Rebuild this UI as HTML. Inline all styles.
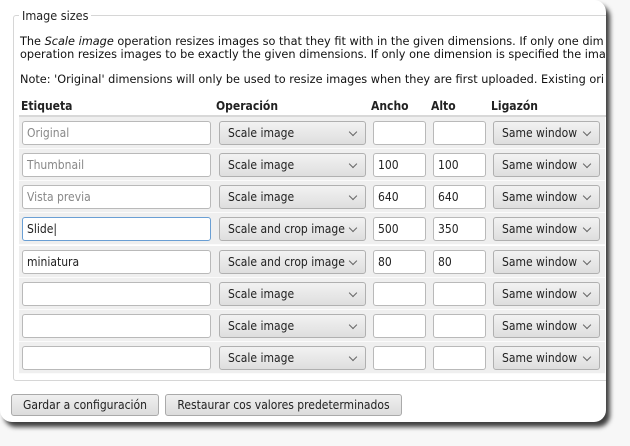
<!DOCTYPE html>
<html><head><meta charset="utf-8"><style>
*{box-sizing:border-box;margin:0;padding:0}
body{width:630px;height:446px;background:#f7f7f7;position:relative;overflow:hidden;font-family:"DejaVu Sans Condensed","DejaVu Sans","Liberation Sans",sans-serif;font-size:12px;color:#222}
.win{position:absolute;left:0;top:0;width:606px;height:422px;background:#fff;border-radius:0 12px 12px 12px;box-shadow:4px 5px 5px rgba(0,0,0,.75);overflow:hidden}
.fs{position:absolute;left:13px;top:15px;width:640px;height:366px;border:1px solid #d6d6d6;border-radius:3px}
.lg{position:absolute;left:19px;top:8px;background:#fff;padding:0 3px;font-size:12.5px}
.t{position:absolute;left:20px;white-space:nowrap;font-family:"DejaVu Sans",sans-serif;font-size:11.3px;color:#111}
.h{position:absolute;top:99px;font-weight:bold;font-size:12px}
.hl{position:absolute;left:19px;top:115px;width:590px;height:2px;background:#d8d8d8}
.row{position:absolute;left:19px;width:586px;height:32px;background:#efefef;border-bottom:1px solid #fbfbfb}
.in{position:absolute;top:4px;height:24px;background:#fff;border:1px solid #b9b9b9;border-radius:3px;padding-left:4px;line-height:22px;font-size:12px;color:#222;white-space:nowrap}
.sel{position:absolute;top:4px;height:24px;border:1px solid #b0b0b0;border-radius:3px;background:linear-gradient(#f2f2f2,#dedede);padding-left:8px;line-height:22px;font-size:12px;color:#222;white-space:nowrap;overflow:hidden}
.sel:after{content:"";position:absolute;right:9px;top:7px;width:5px;height:5px;border-right:1px solid #666;border-bottom:1px solid #666;transform:rotate(45deg)}
.btn{position:absolute;top:394px;height:22px;border:1px solid #aaa;border-radius:3px;background:linear-gradient(#f0f0f0,#dcdcdc);font-size:12px;text-align:center;line-height:20px;color:#222;white-space:nowrap}
</style></head><body>
<div class="win">
<div class="fs"></div>
<div class="lg">Image sizes</div>
<div class="t" style="top:35px">The <i>Scale image</i> operation resizes images so that they fit with in the given dimensions. If only one dim</div>
<div class="t" style="top:48px">operation resizes images to be exactly the given dimensions. If only one dimension is specified the ima</div>
<div class="t" style="top:73px">Note: 'Original' dimensions will only be used to resize images when they are first uploaded. Existing ori</div>
<div class="h" style="left:21px">Etiqueta</div>
<div class="h" style="left:216px">Operación</div>
<div class="h" style="left:371px">Ancho</div>
<div class="h" style="left:431px">Alto</div>
<div class="h" style="left:491px">Ligazón</div>
<div class="hl"></div>

<div class="row" style="top:117px"><div class="in" style="left:3px;width:189px;color:#888">Original</div><div class="sel" style="left:200px;width:147px">Scale image</div><div class="in" style="left:354px;width:53px"></div><div class="in" style="left:414px;width:53px"></div><div class="sel" style="left:474px;width:107px">Same window</div></div>
<div class="row" style="top:149px"><div class="in" style="left:3px;width:189px;color:#888">Thumbnail</div><div class="sel" style="left:200px;width:147px">Scale image</div><div class="in" style="left:354px;width:53px">100</div><div class="in" style="left:414px;width:53px">100</div><div class="sel" style="left:474px;width:107px">Same window</div></div>
<div class="row" style="top:181px"><div class="in" style="left:3px;width:189px;color:#888">Vista previa</div><div class="sel" style="left:200px;width:147px">Scale image</div><div class="in" style="left:354px;width:53px">640</div><div class="in" style="left:414px;width:53px">640</div><div class="sel" style="left:474px;width:107px">Same window</div></div>
<div class="row" style="top:213px"><div class="in" style="left:3px;width:189px;border-color:#6a9fd4">Slide|</div><div class="sel" style="left:200px;width:147px">Scale and crop image</div><div class="in" style="left:354px;width:53px">500</div><div class="in" style="left:414px;width:53px">350</div><div class="sel" style="left:474px;width:107px">Same window</div></div>
<div class="row" style="top:246px"><div class="in" style="left:3px;width:189px">miniatura</div><div class="sel" style="left:200px;width:147px">Scale and crop image</div><div class="in" style="left:354px;width:53px">80</div><div class="in" style="left:414px;width:53px">80</div><div class="sel" style="left:474px;width:107px">Same window</div></div>
<div class="row" style="top:278px"><div class="in" style="left:3px;width:189px"></div><div class="sel" style="left:200px;width:147px">Scale image</div><div class="in" style="left:354px;width:53px"></div><div class="in" style="left:414px;width:53px"></div><div class="sel" style="left:474px;width:107px">Same window</div></div>
<div class="row" style="top:310px"><div class="in" style="left:3px;width:189px"></div><div class="sel" style="left:200px;width:147px">Scale image</div><div class="in" style="left:354px;width:53px"></div><div class="in" style="left:414px;width:53px"></div><div class="sel" style="left:474px;width:107px">Same window</div></div>
<div class="row" style="top:342px"><div class="in" style="left:3px;width:189px"></div><div class="sel" style="left:200px;width:147px">Scale image</div><div class="in" style="left:354px;width:53px"></div><div class="in" style="left:414px;width:53px"></div><div class="sel" style="left:474px;width:107px">Same window</div></div>

<div class="btn" style="left:11px;width:148px">Gardar a configuración</div>
<div class="btn" style="left:165px;width:237px">Restaurar cos valores predeterminados</div>
</div>
</body></html>
